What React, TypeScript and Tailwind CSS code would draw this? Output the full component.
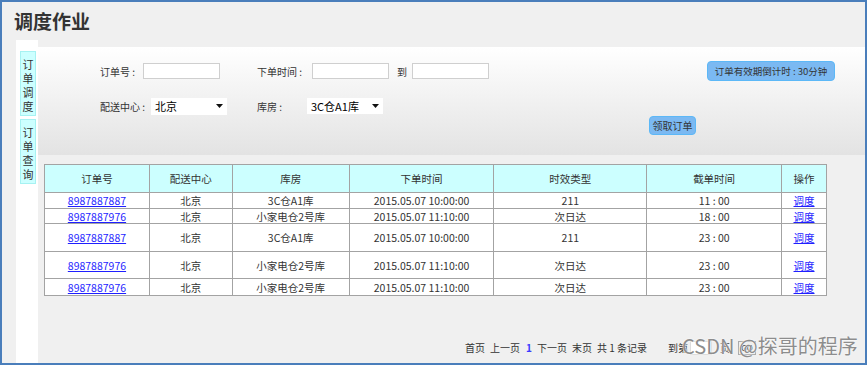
import type { ReactNode } from 'react'

const font = { fontFamily: '"Noto Sans CJK SC", "Liberation Sans", sans-serif' }

interface Order {
  id: string
  center: string
  store: string
  time: string
  kind: string
  cutoff: string
  h: string
}

const orders: Order[] = [
  { id: '8987887887', center: '北京', store: '3C仓A1库', time: '2015.05.07 10:00:00', kind: '211', cutoff: '11 : 00', h: 'h-[16px]' },
  { id: '8987887976', center: '北京', store: '小家电仓2号库', time: '2015.05.07 11:10:00', kind: '次日达', cutoff: '18 : 00', h: 'h-[15px]' },
  { id: '8987887887', center: '北京', store: '3C仓A1库', time: '2015.05.07 10:00:00', kind: '211', cutoff: '23 : 00', h: 'h-[28px]' },
  { id: '8987887976', center: '北京', store: '小家电仓2号库', time: '2015.05.07 11:10:00', kind: '次日达', cutoff: '23 : 00', h: 'h-[27px]' },
  { id: '8987887976', center: '北京', store: '小家电仓2号库', time: '2015.05.07 11:10:00', kind: '次日达', cutoff: '23 : 00', h: 'h-[17px]' },
]

const cols = ['订单号', '配送中心', '库房', '下单时间', '时效类型', '截单时间', '操作']
const widths = ['w-[105px]', 'w-[83px]', 'w-[117px]', 'w-[145px]', 'w-[153px]', 'w-[135px]', 'w-[45px]']

function FakeSelect({ value, className }: { value: string; className: string }) {
  return (
    <div className={`flex shrink-0 items-center justify-between bg-white pl-[4px] pr-[4px] text-[11px] text-black ${className}`}>
      <span className="leading-none">{value}</span>
      <svg width="7" height="4" viewBox="0 0 7 4">
        <path d="M0 0h7L3.5 4z" fill="#111" />
      </svg>
    </div>
  )
}

function BlueButton({ children, className }: { children: ReactNode; className: string }) {
  return (
    <div className={`flex shrink-0 items-center justify-center whitespace-nowrap rounded-[4px] border border-[#5cb8f7] bg-[#7bb9f2] text-[9.5px] text-[#333] ${className}`}>
      {children}
    </div>
  )
}

export default function App() {
  return (
    <div style={font} className="relative flex h-[365px] w-[867px] flex-col overflow-hidden border-2 border-[#4a7ebb] bg-[#f0f0f0] text-[#333]">
      <div className="h-[38px] shrink-0 pl-[12px] pt-[7px]">
        <h1 className="text-[19px] font-bold leading-[24px] text-[#333]">调度作业</h1>
      </div>

      <div className="flex min-h-0 flex-1">
        {/* side tabs */}
        <div className="ml-[14px] flex w-[22px] flex-col gap-[3px] bg-white pl-[4px] pt-[11px]">
          {['订单调度', '订单查询'].map((t) => (
            <div key={t} className="flex h-[65px] w-[16px] flex-col items-center border border-[#a6f2f2] bg-[#ccffff] pt-[5px] text-[11px] leading-[14px] text-[#333]">
              {t.split('').map((c, i) => (
                <span key={i}>{c}</span>
              ))}
            </div>
          ))}
        </div>

        <div className="flex flex-1 flex-col pt-[7px]">
          {/* filters */}
          <div className="flex h-[108px] shrink-0 flex-col whitespace-nowrap bg-linear-to-b from-white to-[#e3e3e3] pt-[14px] text-[10px] text-[#333]">
            <div className="flex h-[20px] items-center pl-[62px]">
              <span className="w-[43px] shrink-0">订单号 :</span>
              <div className="h-[16px] w-[77px] shrink-0 border border-[#cfcfcf] bg-white" />
              <span className="ml-[37px] w-[55px] shrink-0">下单时间 :</span>
              <div className="h-[16px] w-[77px] shrink-0 border border-[#cfcfcf] bg-white" />
              <span className="ml-[8px] w-[15px] shrink-0">到</span>
              <div className="h-[16px] w-[77px] shrink-0 border border-[#cfcfcf] bg-white" />
              <BlueButton className="ml-[218px] h-[20px] w-[128px]">订单有效期倒计时 : 30分钟</BlueButton>
            </div>
            <div className="mt-[16px] flex h-[18px] items-center pl-[62px]">
              <span className="w-[51px] shrink-0">配送中心 :</span>
              <FakeSelect value="北京" className="h-[17px] w-[76px]" />
              <span className="ml-[30px] w-[50px] shrink-0">库房 :</span>
              <FakeSelect value="3C仓A1库" className="h-[16px] w-[76px]" />
            </div>
            <div className="mt-[1px] pl-[611px]">
              <BlueButton className="h-[19px] w-[47px] text-[10px]">领取订单</BlueButton>
            </div>
          </div>

          {/* table */}
          <div className="ml-[6px] mt-[9px]">
            <table className="w-[783px] border-collapse text-[10.5px] text-[#333]">
              <thead>
                <tr className="h-[28px] bg-[#ccffff]">
                  {cols.map((c, i) => (
                    <th key={c} className={`border border-[#a3a3a3] p-0 text-center font-normal ${widths[i]}`}>
                      {c}
                    </th>
                  ))}
                </tr>
              </thead>
              <tbody className="bg-white">
                {orders.map((o, i) => (
                  <tr key={i} className={o.h}>
                    <td className="border border-[#a3a3a3] p-0 text-center leading-[13px]">
                      <a className="text-[#1f1fff] underline">{o.id}</a>
                    </td>
                    <td className="border border-[#a3a3a3] p-0 text-center leading-[13px]">{o.center}</td>
                    <td className="border border-[#a3a3a3] p-0 text-center leading-[13px]">{o.store}</td>
                    <td className="border border-[#a3a3a3] p-0 text-center leading-[13px]">{o.time}</td>
                    <td className="border border-[#a3a3a3] p-0 text-center leading-[13px]">{o.kind}</td>
                    <td className="border border-[#a3a3a3] p-0 text-center leading-[13px]">{o.cutoff}</td>
                    <td className="border border-[#a3a3a3] p-0 text-center leading-[13px]">
                      <a className="text-[#1f1fff] underline">调度</a>
                    </td>
                  </tr>
                ))}
              </tbody>
            </table>
          </div>

          {/* pager */}
          <div className="mt-[44px] flex items-center whitespace-nowrap pl-[427px] text-[10px] text-[#333]">
            <span className="mr-[5px]">首页</span>
            <span className="mr-[6px]">上一页</span>
            <span className="mr-[5px] font-bold text-[#3b3bff]">1</span>
            <span className="mr-[5px]">下一页</span>
            <span className="mr-[5px]">末页</span>
            <span>共 1 条记录</span>
            <span className="ml-[21px]">到第</span>
            <div className="ml-[2px] h-[14px] w-[22px] border border-[#ddd] bg-white" />
            <span className="ml-[8px]">页</span>
            <div className="ml-[8px] flex h-[14px] w-[18px] items-center justify-center border border-[#aaa] bg-[#eee] text-[8px]">GO</div>
          </div>
        </div>
      </div>

      {/* watermark */}
      <div className="pointer-events-none absolute left-[680px] top-[330px] whitespace-nowrap text-[20px] leading-[28px] text-[#8d8d8d] [text-shadow:0_0_2px_#fff,0_0_1px_#fff]">
        CSDN @探哥的程序
      </div>
    </div>
  )
}
